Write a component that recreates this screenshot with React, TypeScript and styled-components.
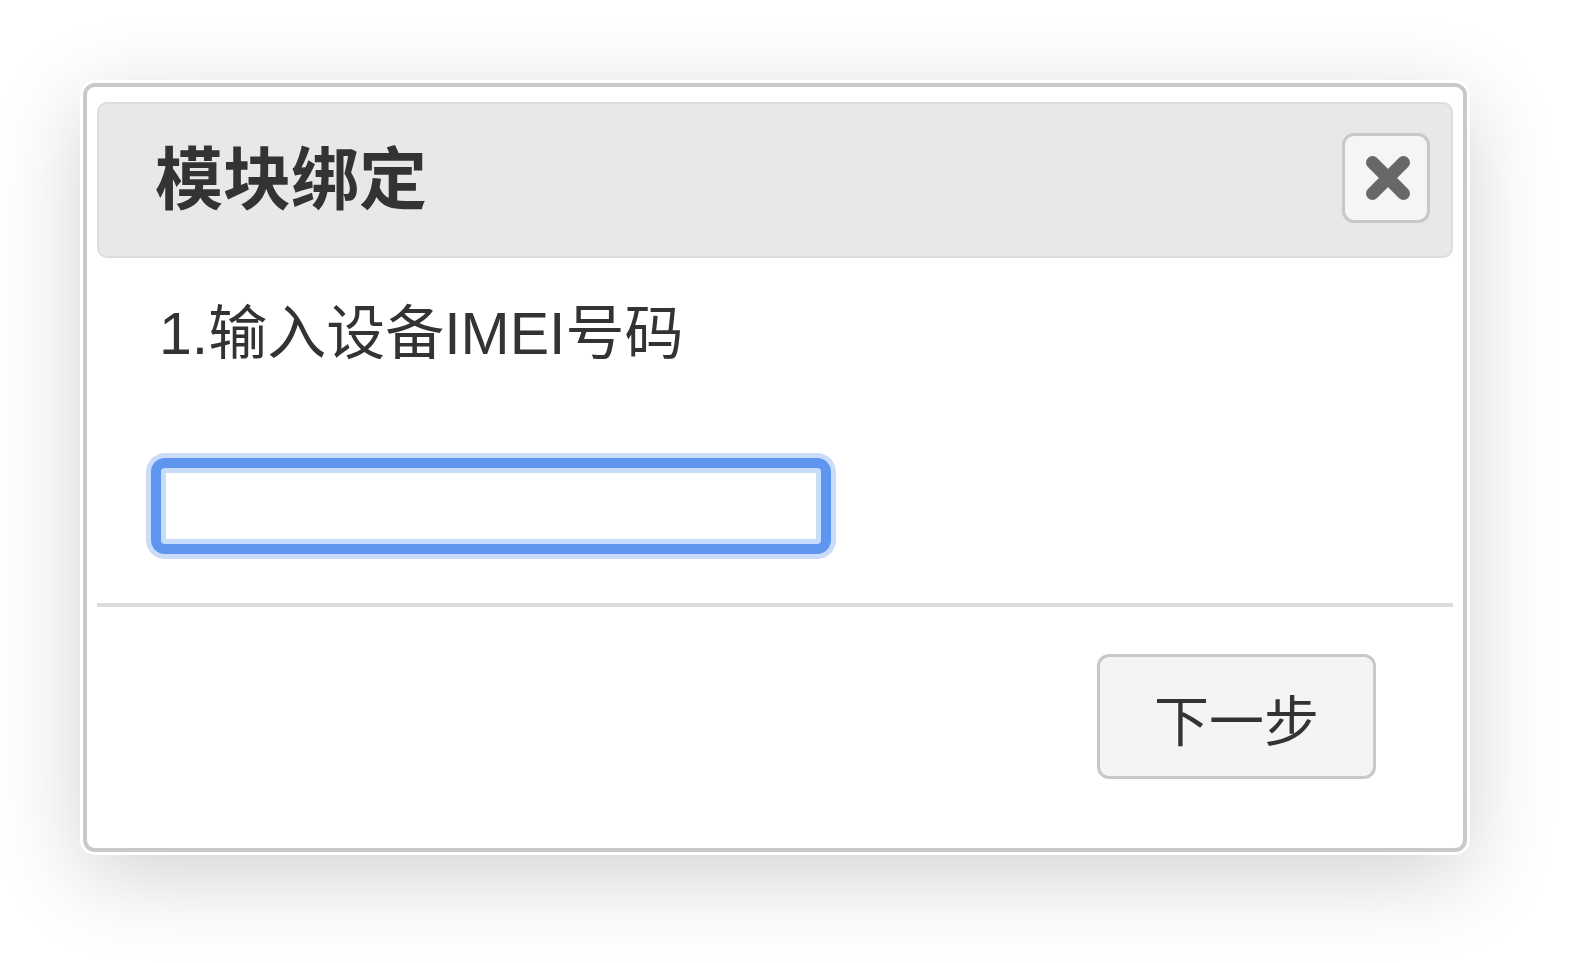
import React, { useState } from "react";
import styled, { createGlobalStyle } from "styled-components";

const GlobalStyle = createGlobalStyle`
  html, body {
    margin: 0;
    padding: 0;
    background: #ffffff;
  }
  body {
    font-family: "Liberation Sans", "Noto Sans CJK SC", sans-serif;
    color: #333;
  }
`;

const Page = styled.div`
  width: 1587px;
  height: 963px;
  box-sizing: border-box;
  padding: 83px 0 0 83px;
  overflow: hidden;
`;

const Dialog = styled.div`
  width: 1384px;
  height: 769px;
  box-sizing: border-box;
  border: 4px solid #c9c9c9;
  border-radius: 12px;
  background: #fff;
  padding: 15px 10px 0 10px;
  display: flex;
  flex-direction: column;
  box-shadow: 0 0 0 3px #fff, 0 22px 90px rgba(0, 0, 0, 0.19);
`;

const Header = styled.div`
  height: 156px;
  box-sizing: border-box;
  border: 2px solid #dcdcdc;
  border-radius: 10px;
  background: #e8e8e8;
  display: flex;
  align-items: center;
  justify-content: space-between;
  padding: 0 21px 0 56px;
`;

const Title = styled.h1`
  margin: 0;
  font-size: 68px;
  font-weight: 700;
  color: #333;
  line-height: 1;
`;

const CloseButton = styled.button`
  width: 88px;
  height: 90px;
  box-sizing: border-box;
  border: 3px solid #c8c8c8;
  border-radius: 12px;
  background: #f5f5f5;
  display: flex;
  align-items: center;
  justify-content: center;
  padding: 0 0 0 4px;
  margin-top: -4px;
  cursor: pointer;
`;

const Body = styled.div`
  height: 349px;
  box-sizing: border-box;
  padding: 36px 0 0 54px;
  border-bottom: 4px solid #dcdcdc;
`;

const Label = styled.div`
  font-size: 59px;
  line-height: 80px;
  padding-left: 8px;
  color: #333;
`;

const ImeiInput = styled.input`
  display: block;
  margin-top: 84px;
  width: 680px;
  height: 96px;
  box-sizing: border-box;
  border: 10px solid #5d95ef;
  border-radius: 14px;
  outline: none;
  background: #fff;
  font-size: 40px;
  padding: 0 16px;
  font-family: inherit;
  box-shadow: inset 0 0 0 5px #c7dbfb, 0 0 0 5px rgba(93, 149, 239, 0.33);
`;

const Footer = styled.div`
  flex: 1;
  display: flex;
  justify-content: flex-end;
  align-items: flex-start;
  padding: 47px 77px 0 0;
`;

const NextButton = styled.button`
  width: 279px;
  height: 125px;
  box-sizing: border-box;
  border: 3px solid #c8c8c8;
  border-radius: 12px;
  background: #f4f4f4;
  font-family: inherit;
  font-size: 55px;
  color: #333;
  cursor: pointer;
  padding: 0;
`;

function CloseIcon() {
  return (
    <svg width="44" height="44" viewBox="0 0 44 44">
      <path
        d="M6.5 6.5 L37.5 37.5 M37.5 6.5 L6.5 37.5"
        stroke="#686868"
        strokeWidth="13"
        strokeLinecap="round"
        fill="none"
      />
    </svg>
  );
}

export default function App() {
  const [imei, setImei] = useState("");
  return (
    <>
      <GlobalStyle />
      <Page>
        <Dialog>
          <Header>
            <Title>模块绑定</Title>
            <CloseButton aria-label="close">
              <CloseIcon />
            </CloseButton>
          </Header>
          <Body>
            <Label>1.输入设备IMEI号码</Label>
            <ImeiInput value={imei} onChange={(e) => setImei(e.target.value)} />
          </Body>
          <Footer>
            <NextButton>下一步</NextButton>
          </Footer>
        </Dialog>
      </Page>
    </>
  );
}
